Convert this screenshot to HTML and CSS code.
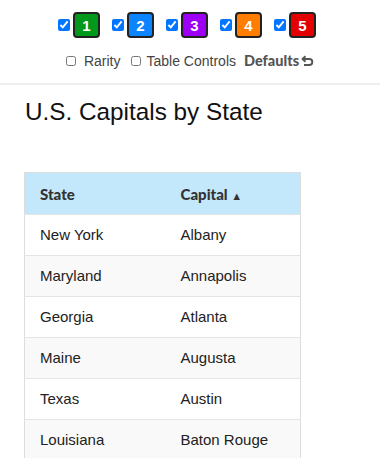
FILE: index.html
```html
<!DOCTYPE html>
<html>
<head>
<meta charset="utf-8">
<link rel="stylesheet" href="styles.css">
</head>
<body>
<header class="toolbar">
  <div class="tiers">
    <label class="tier"><input type="checkbox" checked><span class="badge b1">1</span></label>
    <label class="tier"><input type="checkbox" checked><span class="badge b2">2</span></label>
    <label class="tier"><input type="checkbox" checked><span class="badge b3">3</span></label>
    <label class="tier"><input type="checkbox" checked><span class="badge b4">4</span></label>
    <label class="tier"><input type="checkbox" checked><span class="badge b5">5</span></label>
  </div>
  <div class="options">
    <label class="opt"><input type="checkbox">Rarity</label>
    <label class="opt"><input type="checkbox">Table Controls</label>
    <span class="defaults">Defaults<svg class="undo" width="13" height="12" viewBox="0 0 13 12"><path d="M4.5 1.2 L1.5 4 L4.5 6.8" fill="none" stroke="#555" stroke-width="1.9" stroke-linejoin="round"/><path d="M2 4 H8.3 A3 3 0 0 1 8.3 10 H3" fill="none" stroke="#555" stroke-width="1.9"/></svg></span>
  </div>
</header>
<main class="content">
  <h1 class="title">U.S. Capitals by State</h1>
  <table class="grid">
    <thead>
      <tr><th class="c1">State</th><th class="c2">Capital <span class="sort">▲</span></th></tr>
    </thead>
    <tbody>
      <tr><td>New York</td><td>Albany</td></tr>
      <tr><td>Maryland</td><td>Annapolis</td></tr>
      <tr><td>Georgia</td><td>Atlanta</td></tr>
      <tr><td>Maine</td><td>Augusta</td></tr>
      <tr><td>Texas</td><td>Austin</td></tr>
      <tr><td>Louisiana</td><td>Baton Rouge</td></tr>
    </tbody>
  </table>
</main>
</body>
</html>
```
FILE: styles.css
```css
html, body {
  margin: 0;
  padding: 0;
  background: #fff;
  font-family: "Liberation Sans", Arial, sans-serif;
  color: #222;
}
.toolbar {
  padding-top: 12px;
  box-sizing: border-box;
  border-bottom: 2px solid #eeeeee;
  height: 85px;
}
.tiers {
  display: flex;
  justify-content: center;
  gap: 12px;
  padding-right: 6px;
}
.tier {
  display: flex;
  align-items: center;
  gap: 3px;
}
.tier input {
  width: 12px;
  height: 12px;
  margin: 0;
}
.badge {
  width: 23px;
  height: 22px;
  border: 2px solid #222;
  border-radius: 4px;
  display: flex;
  align-items: center;
  justify-content: center;
  color: #fff;
  font-weight: bold;
  font-size: 15px;
}
.b1 { background: #00991c; }
.b2 { background: #0a84ff; }
.b3 { background: #9d00f5; }
.b4 { background: #ff7d00; }
.b5 { background: #e40000; }
.options {
  display: flex;
  justify-content: center;
  align-items: center;
  margin-top: 14px;
  font-size: 14px;
  color: #444;
}
.opt {
  display: flex;
  align-items: center;
  margin-right: 10px;
}
.opt input {
  width: 10px;
  height: 10px;
  margin: 0 8px 0 0;
}
.opt + .opt input { margin-right: 6px; }
.defaults {
  display: flex;
  align-items: center;
  font-family: Lato, sans-serif;
  font-weight: 900;
  font-size: 14.5px;
  color: #555;
  gap: 2px;
  margin-left: -2px;
}
.content {
  padding: 0 24px;
}
.title {
  margin: 13px 0 0 1px;
  font-size: 24.3px;
  line-height: 28px;
  font-weight: normal;
  color: #111;
}
.grid {
  margin-top: 46px;
  border-collapse: collapse;
  border: 1px solid #dddddd;
  width: 277px;
}
.grid th {
  text-align: left;
  background: #c4e8fb;
  font-family: Lato, sans-serif;
  font-weight: 900;
  font-size: 15px;
  color: #333;
  padding: 0 15px;
  height: 42px;
  box-sizing: border-box;
  line-height: 20px;
}
.grid th.c1 { width: 141px; }
.sort { font-size: 11px; line-height: 0; }
.grid td {
  padding: 10px 15px;
  line-height: 20px;
  font-size: 15px;
  border-top: 1px solid #e4e4e4;
}
.grid tbody tr:nth-child(even) td { background: #f9f9f9; }
```
